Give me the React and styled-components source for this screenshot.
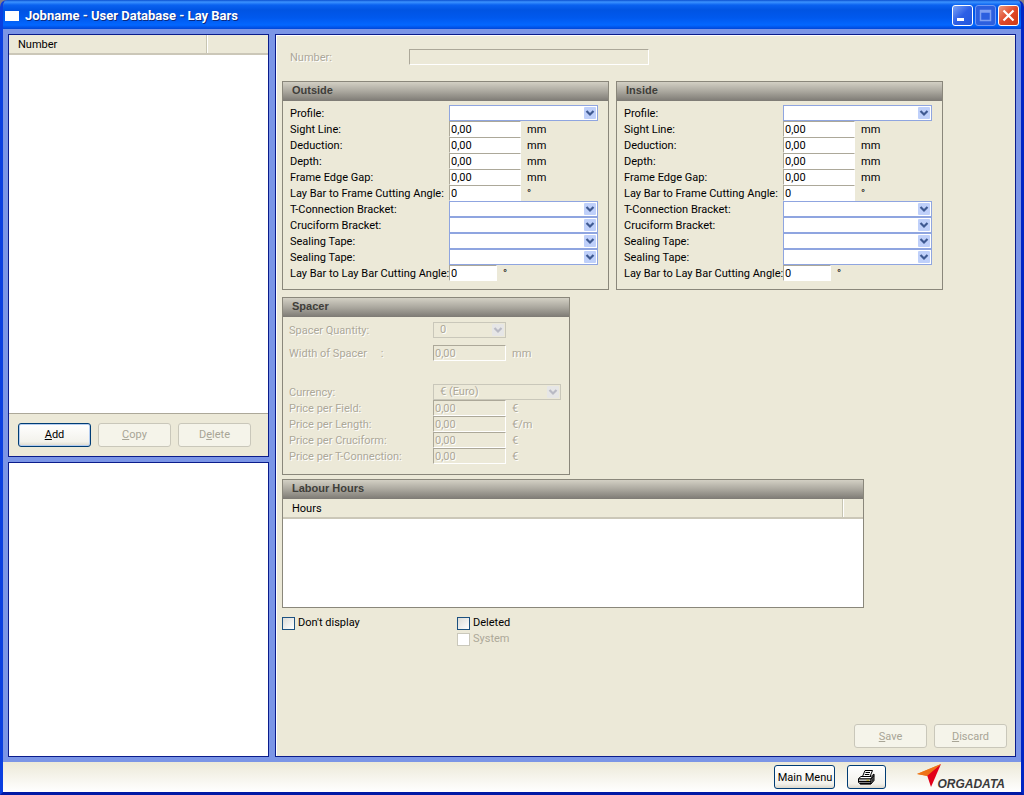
import { useId } from "react";
import styled, { createGlobalStyle, css } from "styled-components";

const measures = [
    { label: "Profile:", type: "select" },
    { label: "Sight Line:", value: "0,00", unit: "mm" },
    { label: "Deduction:", value: "0,00", unit: "mm" },
    { label: "Depth:", value: "0,00", unit: "mm" },
    { label: "Frame Edge Gap:", value: "0,00", unit: "mm" },
    { label: "Lay Bar to Frame Cutting Angle:", value: "0", unit: "°" },
    { label: "T-Connection Bracket:", type: "select" },
    { label: "Cruciform Bracket:", type: "select" },
    { label: "Sealing Tape:", type: "select" },
    { label: "Sealing Tape:", type: "select" },
    { label: "Lay Bar to Lay Bar Cutting Angle:", value: "0", unit: "°", width: 48 },
];

const prices = [
    { label: "Price per Field:", unit: "€" },
    { label: "Price per Length:", unit: "€/m" },
    { label: "Price per Cruciform:", unit: "€" },
    { label: "Price per T-Connection:", unit: "€" },
];

function Dropdown({ id, width, option = "", disabled }) {
    return (
        <SelectBox $width={width}>
            <Select id={id} disabled={disabled}>
                <option>{option}</option>
            </Select>
            <Arrow viewBox="0 0 12 12" $disabled={disabled}>
                <rect width="12" height="12" rx="1" />
                <path d="M2.5 4 6 7.5 9.5 4" />
            </Arrow>
        </SelectBox>
    )
}

function Field({ label, type, value, unit, width, option, disabled }) {
    const id = useId();

    return (
        <Row>
            <Label htmlFor={id} $disabled={disabled}>{label}</Label>
            {type === "select" ? (
                <Dropdown id={id} width={width || 149} option={option} disabled={disabled} />
            ) : (
                <Input id={id} defaultValue={value} disabled={disabled} $width={width || 72} />
            )}
            {unit && <Unit $disabled={disabled}>{unit}</Unit>}
        </Row>
    )
}

function Measures({ title }) {
    return (
        <Group $width={327}>
            <GroupTitle>{title}</GroupTitle>
            <MeasureRows>
                {measures.map((m, i) => <Field key={i} {...m} />)}
            </MeasureRows>
        </Group>
    )
}

function Check({ label, disabled }) {
    return (
        <CheckLabel $disabled={disabled}>
            <CheckBox type="checkbox" disabled={disabled} />
            {label}
        </CheckLabel>
    )
}

function App() {
    return (
        <>
        <GlobalStyle />
        <Window>
            <TitleBar>
                <TitleIcon />
                <Title>Jobname - User Database - Lay Bars</Title>
                <WindowButton aria-label="Minimize">
                    <svg viewBox="0 0 19 19"><path d="M4 13.5h7" stroke="#fff" strokeWidth="3" /></svg>
                </WindowButton>
                <WindowButton aria-label="Maximize" $dim>
                    <svg viewBox="0 0 19 19"><path d="M4.5 4.500h10v10h-10zM4 6h11" stroke="#7fa0f2" strokeWidth="1.5" fill="none" /></svg>
                </WindowButton>
                <WindowButton aria-label="Close" $close>
                    <svg viewBox="0 0 19 19"><path d="M4.500 4.500l10 10M14.500 4.500l-10 10" stroke="#fff" strokeWidth="2.2" /></svg>
                </WindowButton>
            </TitleBar>

            <Body>
                <Side>
                    <ListPanel>
                        <ListTable>
                            <thead>
                                <tr>
                                    <HeadCell>Number</HeadCell>
                                    <HeadCell as="td" $width={62} />
                                </tr>
                            </thead>
                        </ListTable>
                        <ListButtons>
                            <Button $main><u>A</u>dd</Button>
                            <Button disabled><u>C</u>opy</Button>
                            <Button disabled>D<u>e</u>lete</Button>
                        </ListButtons>
                    </ListPanel>
                    <BlankPanel />
                </Side>

                <Main>
                    <NumberRow>
                        <Label htmlFor="number" $disabled>Number:</Label>
                        <Input id="number" disabled $width={240} />
                    </NumberRow>

                    <Groups>
                        <Measures title="Outside" />
                        <Measures title="Inside" />
                    </Groups>

                    <Stack>
                        <Group $width={288}>
                            <GroupTitle>Spacer</GroupTitle>
                            <SpacerRows>
                                <Field label="Spacer Quantity:" type="select" option="0" width={73} disabled />
                                <Field label={"Width of Spacer\u2003 :"} value="0,00" unit="mm" width={73} disabled />
                            </SpacerRows>
                            <PriceRows>
                                <Field label="Currency:" type="select" option="€ (Euro)" width={128} disabled />
                                {prices.map((p) => <Field key={p.label} {...p} value="0,00" width={73} disabled />)}
                            </PriceRows>
                        </Group>

                        <Group $width={582}>
                            <GroupTitle>Labour Hours</GroupTitle>
                            <HoursList>
                                <ListTable>
                                    <thead>
                                        <tr>
                                            <HeadCell>Hours</HeadCell>
                                            <HeadCell as="td" $width={21} />
                                        </tr>
                                    </thead>
                                </ListTable>
                            </HoursList>
                        </Group>
                    </Stack>

                    <Checks>
                        <Check label="Don't display" />
                        <div>
                            <Check label="Deleted" />
                            <Check label="System" disabled />
                        </div>
                    </Checks>

                    <Actions>
                        <Button disabled><u>S</u>ave</Button>
                        <Button disabled><u>D</u>iscard</Button>
                    </Actions>
                </Main>
            </Body>

            <Footer>
                <FooterButton $width={61}>Main Menu</FooterButton>
                <FooterButton $width={39} aria-label="Print">
                    <svg width="17" height="15" viewBox="0 0 17 15">
                        <path d="M4.5 6.500 7 .5h7.500L12 6.500z" fill="#fff" stroke="#000" />
                        <path d="M7.500 2.500h4.500M6.800 4.500h4.500" stroke="#000" />
                        <path d="M.5 8.500 3 6.500h10l3-2.500v6.500l-3 3.500H2.500l-2-1.500z" fill="#fff" stroke="#000" />
                        <path d="M1 8.800h12v5M13 8.800l3-3.300M1 11.500h11.500M2 13.500h11" fill="none" stroke="#000" strokeWidth="1.300" />
                        <path d="M13.500 9 16 6.500v4l-2.500 3z" fill="#333" />
                        <path d="M8.500 10.200h2.500" stroke="#b9a400" />
                    </svg>
                </FooterButton>
                <Logo>
                    <svg width="24" height="23" viewBox="0 0 24 23">
                        <path d="M0 10 24 0 11 12z" fill="#f08a1d" />
                        <path d="M24 0 14 23 10 11z" fill="#e2001a" />
                        <path d="M0 10 10 12 24 0z" fill="#ee7218" />
                    </svg>
                    <LogoText>ORGADATA</LogoText>
                </Logo>
            </Footer>
        </Window>
        </>
    )
}

export default App

const GlobalStyle = createGlobalStyle`
*{
    box-sizing: border-box;
}

body{
    margin: 0;
    background-color: #857f86;
}

body, button, input, select{
    font-family: Roboto, "Liberation Sans", sans-serif;
    font-size: 11px;
    line-height: 16px;
    color: black;
}
`;

const Window = styled.div`
    display: flex;
    flex-direction: column;
    min-height: 100vh;
    overflow: hidden;
    border: solid #0a3fe0;
    border-width: 0 3px 3px;
    border-bottom-color: #0019a5;
    border-right-color: #0026c4;
    border-radius: 7px 7px 0 0;
`;

const TitleBar = styled.header`
    display: flex;
    align-items: center;
    gap: 2px;
    height: 29px;
    padding: 2px 2px 0;
    background: linear-gradient(#0a4fd0 0, #3c93ff 2px, #0a62f0 5px, #0054e3 10px, #0059ee 18px, #0367ff 25px, #0046d8 29px);
`;

const TitleIcon = styled.span`
    width: 14px;
    height: 10px;
    background-color: white;
`;

const Title = styled.h1`
    flex: 1;
    margin: 0 0 0 4px;
    font-size: 13px;
    font-weight: bold;
    color: white;
    text-shadow: 1px 1px #0a2a80;
`;

const WindowButton = styled.button`
    width: 21px;
    height: 21px;
    padding: 0;
    border: 1px solid white;
    border-radius: 3px;
    background: linear-gradient(135deg, #7ba2f5, #2d5fe6 50%, #2257dd);

    svg{
        display: block;
    }

    ${(p) => p.$dim && css`
        border-color: #6f98f5;
        background: #2c5fdf;
    `}

    ${(p) => p.$close && css`
        background: linear-gradient(135deg, #ee9a80, #e0492a 50%, #cf3a14);
    `}
`;

const Body = styled.div`
    display: grid;
    grid-template-columns: 261px 1fr;
    gap: 6px;
    flex: 1;
    padding: 5px;
    background-color: #7b95e6;
`;

const Side = styled.aside`
    display: flex;
    flex-direction: column;
    gap: 5px;
`;

const Panel = styled.section`
    display: flex;
    flex-direction: column;
    border: 1px solid #0a1c8c;
    background-color: #ece9d8;
`;

const ListPanel = styled(Panel)`
    flex: 43;
    background-color: white;
`;

const BlankPanel = styled(Panel)`
    flex: 30;
    background-color: white;
`;

const ListTable = styled.table`
    width: 100%;
    border-collapse: collapse;
    background-color: #ece9d8;
    border-bottom: 2px solid #cbc7b8;
`;

const HeadCell = styled.th`
    width: ${(p) => p.$width ? `${p.$width}px` : "auto"};
    height: 18px;
    padding: 2px 9px 0;
    font-weight: normal;
    text-align: left;

    & + &{
        padding: 0;
        border-left: 1px solid #c7c5b2;
        box-shadow: inset 1px 0 white;
    }
`;

const ListButtons = styled.div`
    display: flex;
    gap: 7px;
    margin-top: auto;
    padding: 9px;
    border-top: 1px solid #aca899;
    background-color: #ece9d8;
`;

const Button = styled.button`
    width: 73px;
    height: 24px;
    padding: 1px 0 0;
    border: 1px solid #003c74;
    border-radius: 3px;
    background: linear-gradient(white, #f3f2ec 80%, #dcd8cc);

    ${(p) => p.$main && css`
        box-shadow: inset 0 0 0 1px #b5cdf0;
    `}

    &:disabled{
        border-color: #c9c7ba;
        background: #f5f4ea;
        color: #a8a596;
    }
`;

const Main = styled(Panel).attrs({ as: "main" })`
    padding: 14px 8px 8px 6px;
    box-shadow: inset 1px 1px white;
`;

const etched = css`
    color: #aca899;
    text-shadow: 1px 1px white;
`;

const Label = styled.label`
    padding-top: 2px;
    white-space: nowrap;
    ${(p) => p.$disabled && etched}
`;

const Unit = styled.span`
    padding: 2px 0 0 6px;
    ${(p) => p.$disabled && etched}
`;

const Input = styled.input`
    width: ${(p) => p.$width}px;
    height: 16px;
    padding: 1px 1px 0;
    border: 1px solid;
    border-color: #aca899 white white #aca899;
    border-radius: 0;
    background-color: white;

    &:disabled{
        background-color: #ece9d8;
        ${etched}
    }
`;

const Row = styled.div`
    display: grid;
    grid-template-columns: var(--label) auto 1fr;
    grid-template-rows: 16px;
    align-items: center;
`;

const NumberRow = styled(Row)`
    --label: 119px;
    padding-left: 8px;
`;

const Groups = styled.div`
    display: flex;
    flex-wrap: wrap;
    gap: 7px;
    margin: 16px 0 7px;
`;

const Stack = styled.div`
    display: grid;
    gap: 4px;
`;

const Group = styled.section`
    width: ${(p) => p.$width}px;
    max-width: 100%;
    border: 1px solid #8a877b;
`;

const GroupTitle = styled.h2`
    margin: 0;
    height: 19px;
    padding: 0 9px;
    background: linear-gradient(#d3d0c4, #aaa79e 50%, #7d7a74);
    font-family: "Liberation Sans", Arial, sans-serif;
    font-size: 11px;
    line-height: 17px;
    color: #3f3e3a;
`;

const MeasureRows = styled.div`
    --label: 159px;
    padding: 4px 7px 8px;
`;

const SpacerRows = styled.div`
    --label: 144px;
    display: grid;
    gap: 7px;
    padding: 5px 6px 0;
`;

const PriceRows = styled.div`
    --label: 144px;
    padding: 23px 6px 10px;
`;

const SelectBox = styled.div`
    display: grid;
    align-items: center;
    width: ${(p) => p.$width}px;

    & > *{
        grid-area: 1 / 1;
    }
`;

const Select = styled.select`
    appearance: none;
    width: 100%;
    height: 16px;
    padding: 0 16px 0 6px;
    border: 1px solid #8fa5e0;
    border-radius: 0;
    background-color: white;
    line-height: 14px;

    &:disabled{
        border-color: #c9c7ba;
        background-color: #ece9d8;
        opacity: 1;
        ${etched}
    }
`;

const Arrow = styled.svg`
    justify-self: end;
    width: 12px;
    height: 12px;
    margin-right: 2px;
    pointer-events: none;
    fill: ${(p) => p.$disabled ? "#e6e6e6" : "#bfd0fa"};

    path{
        fill: none;
        stroke: ${(p) => p.$disabled ? "#b9bac4" : "#3f5a92"};
        stroke-width: 2.2;
    }
`;

const HoursList = styled.div`
    height: 108px;
    background-color: white;
`;

const Checks = styled.div`
    display: grid;
    grid-template-columns: 175px 1fr;
    align-items: start;
    margin-top: 7px;
`;

const CheckLabel = styled.label`
    display: flex;
    align-items: center;
    gap: 3px;
    height: 16px;
    color: ${(p) => p.$disabled ? "#aca899" : "black"};
`;

const CheckBox = styled.input`
    appearance: none;
    width: 13px;
    height: 13px;
    margin: 0;
    border: 1px solid #1c5180;
    background: linear-gradient(135deg, #dcdcd7, white);

    &:disabled{
        border-color: #cac8bb;
        background: white;
    }
`;

const Actions = styled.div`
    display: flex;
    justify-content: flex-end;
    gap: 7px;
    margin-top: auto;
`;

const Footer = styled.footer`
    display: flex;
    align-items: center;
    justify-content: flex-end;
    gap: 12px;
    height: 30px;
    padding-right: 16px;
    background: linear-gradient(#ece9d8, white);
`;

const FooterButton = styled(Button)`
    display: flex;
    align-items: center;
    justify-content: center;
    width: ${(p) => p.$width}px;
    white-space: nowrap;
`;

const Logo = styled.div`
    display: flex;
    align-items: flex-start;
    margin-left: 19px;
`;

const LogoText = styled.span`
    margin: 13px 0 0 -4px;
    font-family: "Liberation Sans", Arial, sans-serif;
    font-size: 12px;
    font-style: italic;
    font-weight: bold;
    line-height: 14px;
    color: #3a3a3c;
`;
